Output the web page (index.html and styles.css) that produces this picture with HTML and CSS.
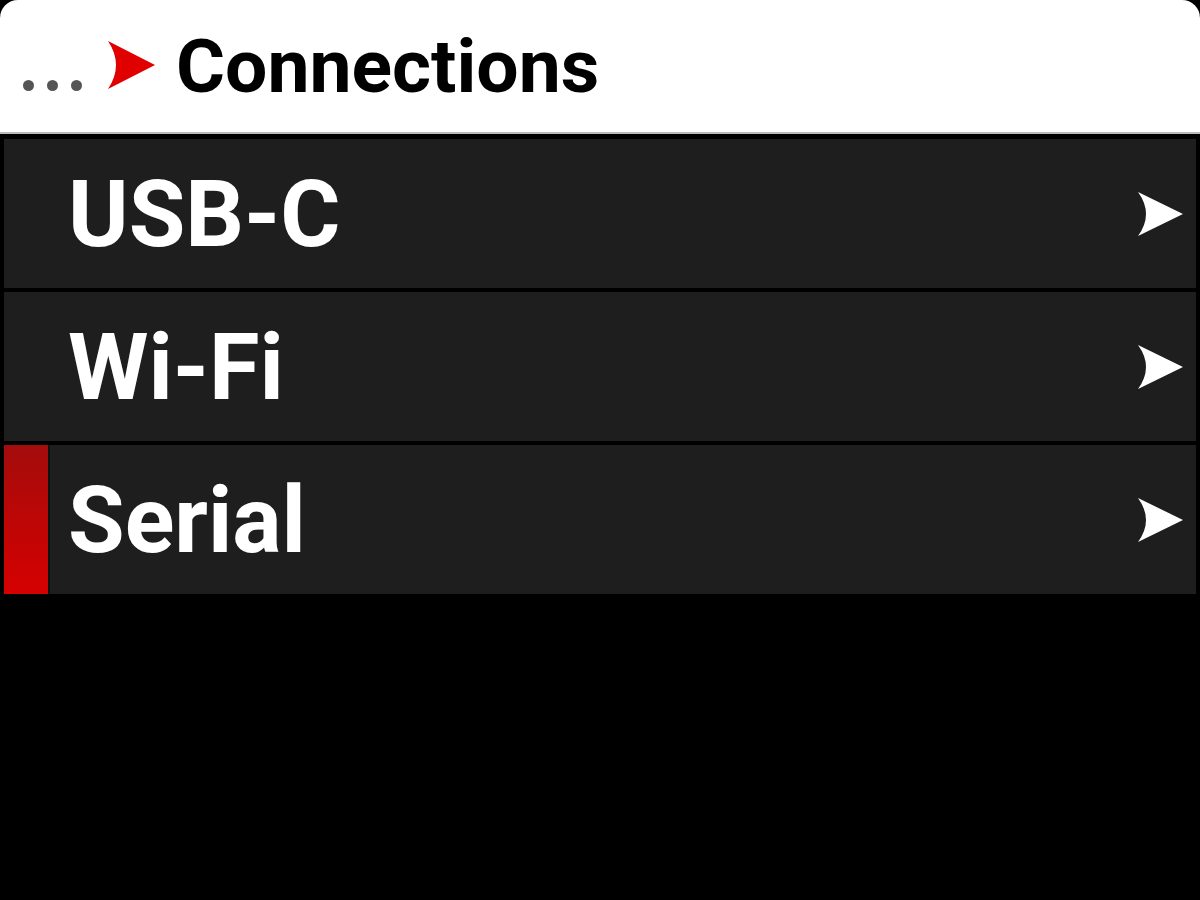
FILE: index.html
```html
<!DOCTYPE html>
<html lang="en">
<head>
    <meta charset="UTF-8">
    <meta name="viewport" content="width=device-width, initial-scale=1.0">
    <title>Connections</title>
    <link rel="stylesheet" href="styles.css">
</head>
<body>

    <div class="screen">
        <!-- breadcrumb header -->
        <div class="header">
            <span class="dots">
                <span class="dot"></span><span class="dot"></span><span class="dot"></span>
            </span>
            <svg class="crumb-arrow" viewBox="0 0 48 48" width="48" height="48">
                <path d="M0 0 L47 24 L0 48 Q16 24 0 0 Z" fill="#e00000"/>
            </svg>
            <h1>Connections</h1>
        </div>

        <!-- menu items -->
        <ul class="menu">
            <li class="item">
                <span class="label">USB-C</span>
                <svg class="chev" viewBox="0 0 46 44" width="46" height="44">
                    <path d="M0 0 L45 22 L0 44 Q16 22 0 0 Z" fill="#fff"/>
                </svg>
            </li>
            <li class="item">
                <span class="label">Wi-Fi</span>
                <svg class="chev" viewBox="0 0 46 44" width="46" height="44">
                    <path d="M0 0 L45 22 L0 44 Q16 22 0 0 Z" fill="#fff"/>
                </svg>
            </li>
            <li class="item selected">
                <span class="marker"></span>
                <span class="label">Serial</span>
                <svg class="chev" viewBox="0 0 46 44" width="46" height="44">
                    <path d="M0 0 L45 22 L0 44 Q16 22 0 0 Z" fill="#fff"/>
                </svg>
            </li>
        </ul>
    </div>

</body>
</html>
```

FILE: styles.css
```css
html, body {
    margin: 0;
    padding: 0;
    background-color: #000;
}

body {
    font-family: Roboto, "Liberation Sans", sans-serif;
    width: 1200px;
    height: 900px;
    overflow: hidden;
}

.header {
    height: 134px;
    background-color: #fff;
    border-radius: 18px 18px 0 0;
    display: flex;
    align-items: center;
    padding-left: 23px;
    box-sizing: border-box;
    border-bottom: 2px solid #bbb;
}

.dots {
    display: flex;
    gap: 13px;
    margin-top: 38px;
}

.dot {
    width: 11px;
    height: 11px;
    border-radius: 50%;
    background-color: #555;
}

.crumb-arrow {
    margin-left: 26px;
    margin-top: -2px;
}

h1 {
    margin: 0 0 0 20px;
    font-size: 75px;
    font-weight: 700;
    color: #000;
    line-height: 1;
}

.menu {
    list-style-type: none;
    margin: 0;
    padding: 5px 4px 0 4px;
    display: flex;
    flex-direction: column;
    gap: 4px;
}

.item {
    position: relative;
    height: 149px;
    background-color: #1e1e1e;
    display: flex;
    align-items: center;
    padding: 0 12px 0 64px;
}

.label {
    flex: 1;
    color: #fff;
    font-size: 92px;
    font-weight: 700;
    line-height: 1;
    margin-top: 2px;
}

.marker {
    position: absolute;
    left: 0;
    top: 0;
    bottom: 0;
    width: 44px;
    background: linear-gradient(#a40c0c, #d50000);
    border-right: 2px solid #0c1414;
}
```
